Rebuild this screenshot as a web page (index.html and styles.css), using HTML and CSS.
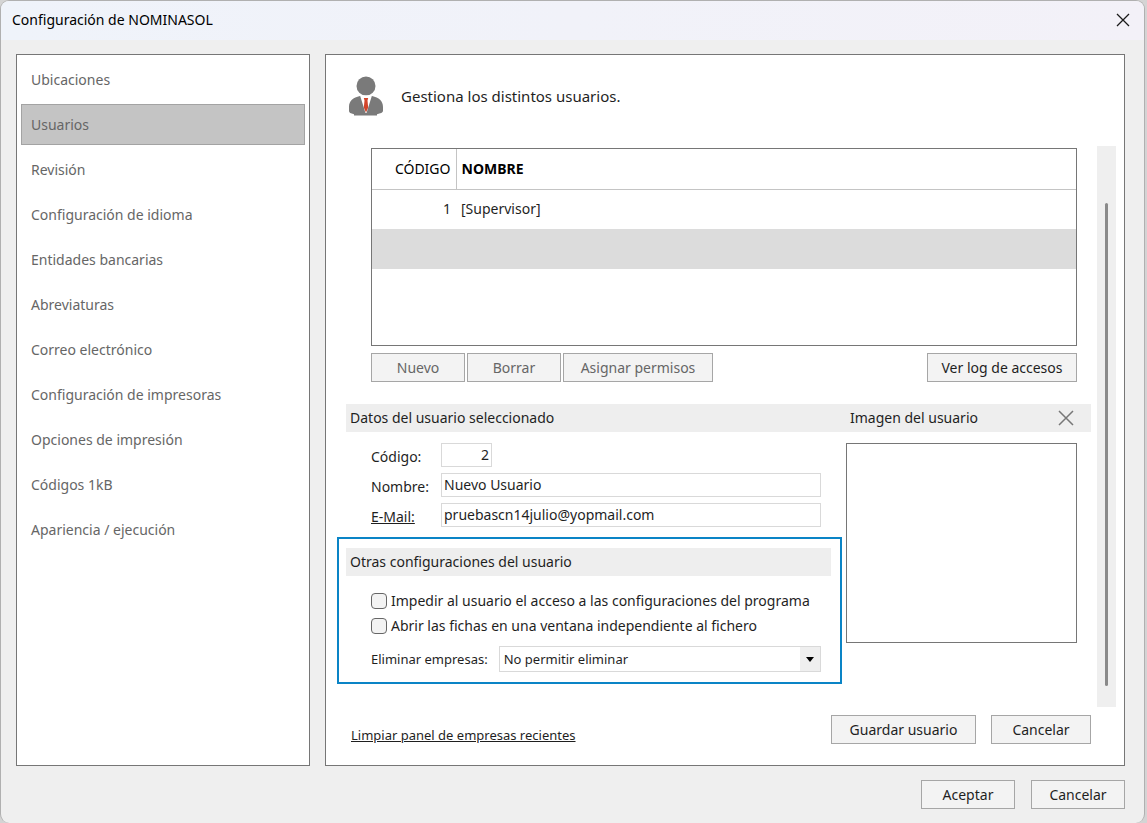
FILE: index.html
```html
<!DOCTYPE html>
<html lang="es">
<head>
    <meta charset="UTF-8">
    <meta name="viewport" content="width=device-width, initial-scale=1.0">
    <title>Configuración de NOMINASOL</title>
    <link rel="stylesheet" href="styles.css">
</head>
<body>

    <div class="window">
        <!-- Barra de título -->
        <header class="titlebar">
            <h1>Configuración de NOMINASOL</h1>
            <button type="button" class="icon-btn" aria-label="Cerrar">
                <svg width="14" height="14" viewBox="0 0 14 14" fill="none" stroke="#1a1a1a" stroke-width="1.3"><path d="M1 1l12 12M13 1L1 13"/></svg>
            </button>
        </header>

        <div class="panels">
            <!-- Menú lateral -->
            <nav class="sidebar">
                <a href="#">Ubicaciones</a>
                <a href="#" class="active">Usuarios</a>
                <a href="#">Revisión</a>
                <a href="#">Configuración de idioma</a>
                <a href="#">Entidades bancarias</a>
                <a href="#">Abreviaturas</a>
                <a href="#">Correo electrónico</a>
                <a href="#">Configuración de impresoras</a>
                <a href="#">Opciones de impresión</a>
                <a href="#">Códigos 1kB</a>
                <a href="#">Apariencia / ejecución</a>
            </nav>

            <main class="panel">
                <div class="panel-head">
                    <svg width="36" height="40" viewBox="0 0 36 40">
                        <circle cx="18" cy="10" r="9.5" fill="#7a7a7a"/>
                        <path d="M12 20C5 21.500 1 25 1 31v4c0 1.500 1.500 2.500 5 3.200V39.500h23v-1.300c3.500-.7 6-1.700 6-3.200v-4c0-6-4-9.500-11-11z" fill="#7a7a7a"/>
                        <path d="M12 19.500h12L18.500 37h-1z" fill="#fff"/>
                        <path d="M15.800 22h4.400l-.7 2.500.7 7L18 36.500l-2.200-5 .7-7z" fill="#d2452b"/>
                    </svg>
                    <p>Gestiona los distintos usuarios.</p>
                </div>

                <div class="scroll">
                    <div class="content">
                        <!-- Lista de usuarios -->
                        <div class="users">
                            <table>
                                <thead>
                                    <tr><th class="code">CÓDIGO</th><th class="name">NOMBRE</th></tr>
                                </thead>
                                <tbody>
                                    <tr><td class="code">1</td><td>[Supervisor]</td></tr>
                                    <tr class="selected"><td class="code"></td><td></td></tr>
                                </tbody>
                            </table>
                        </div>
                        <div class="toolbar">
                            <button type="button" class="btn" disabled>Nuevo</button>
                            <button type="button" class="btn" disabled>Borrar</button>
                            <button type="button" class="btn wide" disabled>Asignar permisos</button>
                            <button type="button" class="btn wide push">Ver log de accesos</button>
                        </div>

                        <div class="section-bar user-bar">
                            <h2>Datos del usuario seleccionado</h2>
                            <div class="image-title">
                                <h2>Imagen del usuario</h2>
                                <button type="button" class="icon-btn" aria-label="Quitar imagen">
                                    <svg width="16" height="16" viewBox="0 0 16 16" fill="none" stroke="#777" stroke-width="1.5"><path d="M1 1l14 14M15 1L1 15"/></svg>
                                </button>
                            </div>
                        </div>

                        <div class="detail">
                            <form class="user-form">
                                <div class="field">
                                    <label for="codigo">Código:</label>
                                    <input type="text" id="codigo" class="short" value="2">
                                </div>
                                <div class="field">
                                    <label for="nombre">Nombre:</label>
                                    <input type="text" id="nombre" value="Nuevo Usuario">
                                </div>
                                <div class="field">
                                    <label for="email" class="underline">E-Mail:</label>
                                    <input type="text" id="email" value="pruebascn14julio@yopmail.com">
                                </div>

                                <!-- Otras configuraciones -->
                                <div class="highlight">
                                    <div class="section-bar"><h2>Otras configuraciones del usuario</h2></div>
                                    <div class="options">
                                        <label class="check"><input type="checkbox">Impedir al usuario el acceso a las configuraciones del programa</label>
                                        <label class="check"><input type="checkbox">Abrir las fichas en una ventana independiente al fichero</label>
                                        <div class="select-row">
                                            <label for="eliminar">Eliminar empresas:</label>
                                            <div class="select">
                                                <select id="eliminar"><option>No permitir eliminar</option></select>
                                                <span class="arrow"><svg width="8" height="5" viewBox="0 0 8 5"><path d="M0 0h8L4 5z" fill="#000"/></svg></span>
                                            </div>
                                        </div>
                                    </div>
                                </div>
                            </form>
                            <div class="user-image"></div>
                        </div>
                    </div>

                    <div class="scrollbar"><div class="thumb"></div></div>
                </div>

                <div class="panel-foot">
                    <a href="#">Limpiar panel de empresas recientes</a>
                    <div class="panel-actions">
                        <button type="button" class="btn save">Guardar usuario</button>
                        <button type="button" class="btn cancel">Cancelar</button>
                    </div>
                </div>
            </main>
        </div>

        <footer class="actions">
            <button type="button" class="btn">Aceptar</button>
            <button type="button" class="btn">Cancelar</button>
        </footer>
    </div>

</body>
</html>
```

FILE: styles.css
```css
:root {
    --bg: #efefef;
    --border: #767676;
    --border-light: #d9d9d9;
    --btn-border: #a6a6a6;
    --text: #1f1f1f;
    --muted: #666;
    --blue: #0a84c6;
}

* {
    box-sizing: border-box;
    margin: 0;
    padding: 0;
}

body {
    font-family: 'Noto Sans', 'Open Sans', sans-serif;
    font-size: 14px;
    line-height: 18px;
    color: var(--text);
    background: #d4d4d4;
    padding-right: 2px;
}

button, input, select {
    font: inherit;
    color: inherit;
}

h1, h2 {
    font-size: 14px;
    font-weight: normal;
}

a {
    color: inherit;
}

.window {
    display: flex;
    flex-direction: column;
    min-height: 100vh;
    background: var(--bg);
    border: 1px solid #b0b0b0;
    border-bottom: 0;
    border-radius: 9px;
    overflow: hidden;
}

/* Barra de título */
.titlebar {
    display: flex;
    justify-content: space-between;
    align-items: center;
    height: 39px;
    padding: 0 14px 2px 11px;
    background: linear-gradient(90deg, #eff3fa, #f3f1f8);
}

.titlebar h1 {
    color: #000;
}

.icon-btn {
    display: flex;
    background: none;
    border: 0;
}

.panels {
    display: flex;
    flex: 1;
    gap: 15px;
    padding: 14px 19px 0 15px;
}

/* Menú lateral */
.sidebar {
    display: flex;
    flex-direction: column;
    gap: 4px;
    width: 294px;
    padding: 4px;
    background: #fff;
    border: 1px solid var(--border);
}

.sidebar a {
    padding: 11px 9px 10px;
    border: 1px solid transparent;
    color: var(--muted);
    text-decoration: none;
}

.sidebar a.active {
    background: #c4c4c4;
    border-color: #a3a3a3;
}

/* Panel principal */
.panel {
    display: flex;
    flex-direction: column;
    flex: 1;
    background: #fff;
    border: 1px solid var(--border);
}

.panel-head {
    display: flex;
    align-items: center;
    gap: 17px;
    padding: 21px 22px 30px;
    font-size: 15px;
}

.scroll {
    display: flex;
    flex: 1;
    padding-right: 8px;
}

.content {
    flex: 1;
    padding: 2px 6px 0 11px;
}

.scrollbar {
    display: flex;
    width: 19px;
    padding: 57px 8px 21px;
    background: var(--bg);
}

.thumb {
    flex: 1;
    background: #8a8a8a;
    border-radius: 2px;
}

/* Lista de usuarios */
.users {
    height: 198px;
    margin: 0 14px 0 34px;
    border: 1px solid var(--border);
}

.users table {
    width: 100%;
    border-collapse: collapse;
}

.users th,
.users td {
    height: 40px;
    padding: 0 5px;
    text-align: left;
}

.users th {
    border-bottom: 1px solid #c4c4c4;
    color: #000;
}

.users .code {
    width: 84px;
    font-weight: normal;
    text-align: right;
}

.users th.code {
    border-right: 1px solid #c4c4c4;
}

.users .selected {
    background: #dcdcdc;
}

.toolbar {
    display: flex;
    gap: 2px;
    margin: 7px 14px 22px 34px;
}

.btn {
    width: 94px;
    height: 29px;
    background: #f3f3f3;
    border: 1px solid var(--btn-border);
}

.btn:disabled {
    color: var(--muted);
}

.btn.wide {
    width: 150px;
}

.btn.save {
    width: 145px;
}

.btn.cancel {
    width: 100px;
}

.push {
    margin-left: auto;
}

/* Secciones */
.section-bar {
    display: flex;
    align-items: center;
    height: 28px;
    padding-left: 4px;
    background: #eee;
}

.user-bar {
    justify-content: space-between;
    margin-left: 9px;
}

.image-title {
    display: flex;
    justify-content: space-between;
    align-items: center;
    width: 245px;
    padding: 0 17px 0 4px;
}

.detail {
    display: flex;
    gap: 4px;
    padding: 11px 14px 0 0;
}

.user-form {
    display: flex;
    flex-direction: column;
    flex: 1;
    gap: 6px;
}

.field {
    display: flex;
    align-items: flex-end;
    padding: 0 21px 0 34px;
}

.field label {
    width: 70px;
    padding-bottom: 1px;
}

.field input {
    flex: 1;
    min-width: 0;
    height: 24px;
    padding: 0 2px 2px;
    border: 1px solid var(--border-light);
}

.field input.short {
    flex: none;
    width: 51px;
    text-align: right;
}

.underline {
    text-decoration: underline;
}

.highlight {
    margin-top: 4px;
    padding: 9px 9px 10px 7px;
    border: 2px solid var(--blue);
}

.options {
    display: flex;
    flex-direction: column;
    gap: 7px;
    padding: 16px 10px 0 25px;
}

.check {
    display: flex;
    align-items: center;
    gap: 4px;
    white-space: nowrap;
}

.check input {
    appearance: none;
    width: 16px;
    height: 16px;
    background: #f3f3f3;
    border: 1px solid #666;
    border-radius: 4px;
}

.select-row {
    display: flex;
    align-items: center;
    gap: 11px;
    margin-top: 4px;
    font-size: 13px;
}

.select {
    position: relative;
    flex: 1;
}

.select select {
    display: block;
    appearance: none;
    width: 100%;
    height: 26px;
    padding: 0 4px;
    background: #fff;
    border: 1px solid var(--border-light);
}

.select .arrow {
    position: absolute;
    top: 1px;
    right: 1px;
    bottom: 1px;
    display: flex;
    align-items: center;
    justify-content: center;
    width: 20px;
    background: var(--bg);
    pointer-events: none;
}

.user-image {
    width: 231px;
    height: 200px;
    border: 1px solid var(--border);
}

/* Botones inferiores */
.panel-foot {
    display: flex;
    justify-content: space-between;
    align-items: flex-end;
    padding: 8px 33px 21px 25px;
}

.panel-foot a {
    font-size: 13px;
}

.panel-actions {
    display: flex;
    gap: 15px;
}

.actions {
    display: flex;
    justify-content: flex-end;
    gap: 16px;
    padding: 14px 19px;
}
```
